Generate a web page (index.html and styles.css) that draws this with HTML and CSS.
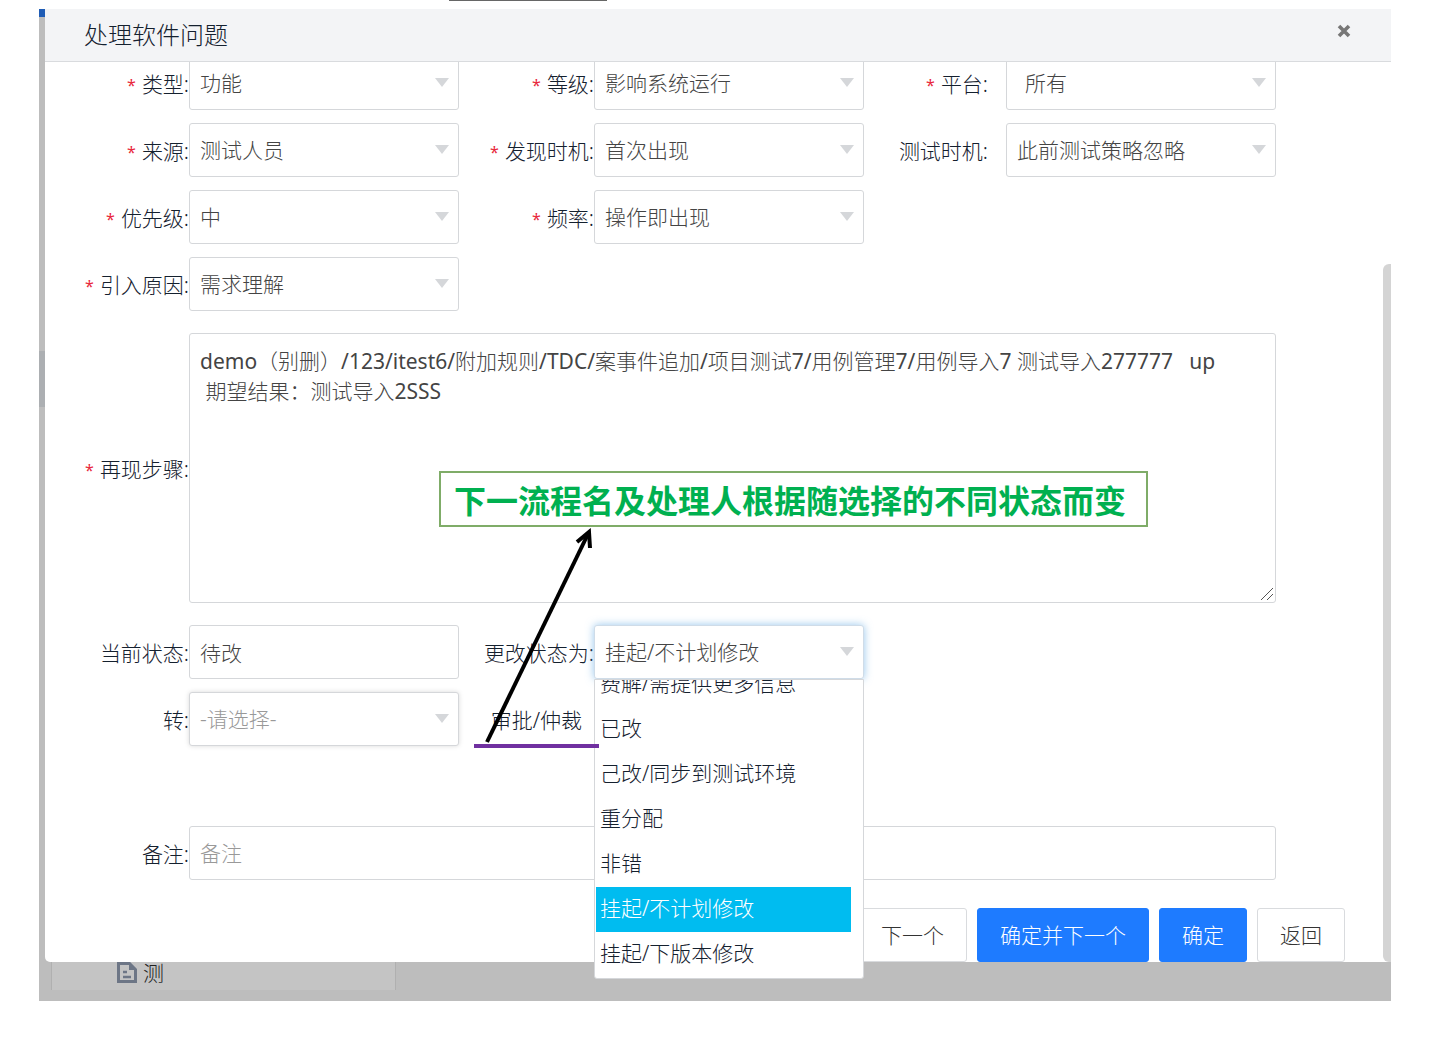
FILE: index.html
```html
<!DOCTYPE html>
<html lang="zh-CN">
<head>
  <meta charset="utf-8">
  <meta name="viewport" content="width=device-width, initial-scale=1">
  <title>处理软件问题</title>
  <link rel="stylesheet" href="styles.css">
</head>
<body>
  <div class="top-rule"></div>
  <main class="app">
    <section class="dialog" aria-labelledby="dialog-title">
      <header class="dialog-header">
        <h1 class="dialog-title" id="dialog-title">处理软件问题</h1>
        <button class="close" type="button" aria-label="关闭">
          <svg width="14" height="14" viewBox="0 0 14 14"><path d="M2 2L12 12M12 2L2 12" stroke="#777" stroke-width="3.6"/></svg>
        </button>
      </header>

      <form class="form">
        <div class="row">
          <label class="label" for="type"><span class="req">*</span>类型:</label>
          <div class="pick"><select class="field" id="type"><option>功能</option></select></div>
          <label class="label" for="level"><span class="req">*</span>等级:</label>
          <div class="pick"><select class="field" id="level"><option>影响系统运行</option></select></div>
          <label class="label label-spaced" for="platform"><span class="req">*</span>平台:</label>
          <div class="pick"><select class="field field-indent" id="platform"><option>所有</option></select></div>
        </div>
        <div class="row">
          <label class="label" for="source"><span class="req">*</span>来源:</label>
          <div class="pick"><select class="field" id="source"><option>测试人员</option></select></div>
          <label class="label" for="found"><span class="req">*</span>发现时机:</label>
          <div class="pick"><select class="field" id="found"><option>首次出现</option></select></div>
          <label class="label label-spaced" for="timing">测试时机:</label>
          <div class="pick"><select class="field" id="timing"><option>此前测试策略忽略</option></select></div>
        </div>
        <div class="row">
          <label class="label" for="priority"><span class="req">*</span>优先级:</label>
          <div class="pick"><select class="field" id="priority"><option>中</option></select></div>
          <label class="label" for="rate"><span class="req">*</span>频率:</label>
          <div class="pick"><select class="field" id="rate"><option>操作即出现</option></select></div>
        </div>
        <div class="row">
          <label class="label" for="cause"><span class="req">*</span>引入原因:</label>
          <div class="pick"><select class="field" id="cause"><option>需求理解</option></select></div>
        </div>
        <div class="row row-steps">
          <label class="label" for="steps"><span class="req">*</span>再现步骤:</label>
          <div class="wide steps">
            <textarea class="field area" id="steps">demo（别删）/123/itest6/附加规则/TDC/案事件追加/项目测试7/用例管理7/用例导入7 测试导入277777&nbsp;&nbsp; up
 期望结果：测试导入2SSS</textarea>
            <svg class="grip" width="14" height="14" viewBox="0 0 14 14"><path d="M1 13L13 1M7 13L13 7" stroke="#555" stroke-width="1"/></svg>
          </div>
        </div>
        <div class="row">
          <label class="label" for="state">当前状态:</label>
          <input class="field" id="state" type="text" value="待改">
          <label class="label" for="next-state">更改状态为:</label>
          <div class="pick pick-open">
            <select class="field field-focus" id="next-state"><option>挂起/不计划修改</option></select>
            <ul class="menu" role="listbox" aria-label="更改状态为">
              <li class="item" role="option">费解/需提供更多信息</li>
              <li class="item" role="option">已改</li>
              <li class="item" role="option">己改/同步到测试环境</li>
              <li class="item" role="option">重分配</li>
              <li class="item" role="option">非错</li>
              <li class="item item-on" role="option" aria-selected="true">挂起/不计划修改</li>
              <li class="item" role="option">挂起/下版本修改</li>
            </ul>
          </div>
        </div>
        <div class="row">
          <label class="label" for="assignee">转:</label>
          <div class="pick"><select class="field field-empty" id="assignee"><option>-请选择-</option></select></div>
          <span class="label label-flow">审批/仲裁</span>
        </div>
        <div class="row row-note">
          <label class="label" for="note">备注:</label>
          <input class="field wide" id="note" type="text" placeholder="备注">
        </div>
        <div class="actions">
          <button class="btn" type="button">下一个</button>
          <button class="btn btn-primary" type="button">确定并下一个</button>
          <button class="btn btn-primary" type="button">确定</button>
          <button class="btn" type="button">返回</button>
        </div>
      </form>

      <div class="scroll-thumb"></div>
      <p class="callout">下一流程名及处理人根据随选择的不同状态而变</p>
      <svg class="arrow" width="130" height="222" viewBox="0 0 130 222" fill="none">
        <path d="M13 214L114 6" stroke="#000" stroke-width="4"/>
        <path d="M103 14L115 4L116 20" stroke="#000" stroke-width="4"/>
        <path d="M0 218H125" stroke="#7030a0" stroke-width="4"/>
      </svg>
    </section>

    <div class="backdrop">
      <div class="tree">
        <svg width="20" height="22" viewBox="0 0 20 22" fill="none"><path d="M1.500 1.500H12.500L18.500 7.500V19.500H1.500Z" stroke="#6d7686" stroke-width="3"/><path d="M12 1V8H19Z" fill="#6d7686"/><path d="M6 10H10M6 15H14" stroke="#6d7686" stroke-width="2.500"/></svg>
        <span>测</span>
      </div>
    </div>
  </main>
</body>
</html>
```
FILE: styles.css
```css
* {
  box-sizing: border-box;
}

body {
  margin: 0;
  background: #fff;
  color: #14202e;
  font: 300 21px/30px "Noto Sans", "Noto Sans CJK SC", sans-serif;
}

.top-rule {
  width: 158px;
  height: 1px;
  margin-left: 449px;
  background: #666;
}

/* Dimmed application behind the dialog; the left edge shows its top bar and a menu row */
.app {
  margin: 8px 45px 0 39px;
  padding-left: 6px;
  background:
    linear-gradient(#1f5cb5, #1f5cb5) 0 0 / 6px 8px no-repeat,
    linear-gradient(#acafb2, #acafb2) 0 342px / 6px 56px no-repeat,
    #bdbdbd;
}

.dialog {
  position: relative;
  background: #fff;
  border-radius: 0 0 0 5px;
}

.dialog-header {
  position: relative;
  z-index: 1;
  display: flex;
  justify-content: space-between;
  align-items: flex-start;
  height: 53px;
  padding: 11px 40px 0 39px;
  background: #f3f4f6;
  border-bottom: 1px solid #d9dbde;
}

.dialog-title {
  margin: 0;
  font-size: 24px;
  font-weight: 300;
  line-height: 30px;
}

.close {
  display: flex;
  padding: 4px 0;
  border: 0;
  background: none;
}

/* The form is scrolled slightly, so its first row tucks under the header */
.form {
  margin-top: -6px;
}

.row {
  display: grid;
  grid-template-columns: 144px 1fr 135px 1fr 142px 1fr;
  align-items: center;
  margin-bottom: 13px;
  padding-right: 115px;
}

.row-steps {
  margin: 22px 0;
}

.row-note {
  margin: 80px 0 28px;
}

.wide {
  grid-column: 2 / 7;
}

.label {
  padding-top: 2px;
  text-align: right;
  white-space: nowrap;
}

.label-spaced {
  padding-right: 18px;
}

.label-flow {
  padding-right: 12px;
}

.req {
  margin-right: 6px;
  color: #e8283c;
  font-size: 16px;
  font-weight: 400;
  vertical-align: 1px;
}

.pick,
.steps {
  position: relative;
}

.pick::after {
  content: "";
  position: absolute;
  top: 22px;
  right: 10px;
  border: 7px solid transparent;
  border-top: 9px solid #d5d7da;
  border-bottom: 0;
  pointer-events: none;
}

.field {
  display: block;
  width: 100%;
  height: 54px;
  margin: 0;
  padding: 0 10px;
  border: 1px solid #d5d7da;
  border-radius: 3px;
  outline: 0;
  appearance: none;
  background: #fff;
  color: #444;
  font: inherit;
}

.field::placeholder {
  color: #999;
  opacity: 1;
}

.field-indent {
  padding-left: 18px;
}

.field-focus {
  border-color: #cfdce8;
  box-shadow: 0 0 8px rgba(82, 160, 225, 0.6);
}

.field-empty {
  color: #999;
  box-shadow: 0 0 5px rgba(0, 0, 0, 0.15);
}

.area {
  height: 270px;
  padding: 12px 10px;
  overflow: hidden;
  resize: none;
  font-family: "Noto Sans", "Noto Sans CJK SC Light", "Noto Sans CJK SC", sans-serif;
  font-weight: 400;
}

.grip {
  position: absolute;
  right: 2px;
  bottom: 2px;
}

.pick-open {
  z-index: 2;
}

.menu {
  position: absolute;
  top: 100%;
  left: 0;
  right: 0;
  height: 300px;
  margin: 0;
  padding: 0 12px 0 1px;
  overflow: hidden;
  border: 1px solid #d5d7da;
  border-radius: 0 0 3px 3px;
  background: #fff;
  list-style: none;
}

.item {
  padding: 0 4px 2px;
  line-height: 43px;
}

/* The list is scrolled to its end, which cuts the first visible entry */
.item:first-child {
  margin-top: -18px;
}

.item-on {
  background: #00bcf0;
  color: #fff;
}

.actions {
  display: flex;
  justify-content: flex-end;
  gap: 10px;
  padding-right: 46px;
}

.btn {
  height: 54px;
  padding: 0 22px;
  border: 1px solid #d9dbde;
  border-radius: 3px;
  background: #fff;
  color: #333;
  font: inherit;
}

.btn-primary {
  border-color: #1e7bff;
  background: #1e7bff;
  color: #fff;
}

.scroll-thumb {
  position: absolute;
  top: 255px;
  right: 0;
  bottom: 0;
  width: 8px;
  border-radius: 6px 0 0 6px;
  background: #d4d4d4;
}

.callout {
  position: absolute;
  top: 462px;
  left: 394px;
  margin: 0;
  padding: 4px 20px 4px 13px;
  border: 2px solid #7fac68;
  background: #fff;
  color: #00b050;
  font-family: "Noto Sans CJK SC", sans-serif;
  font-size: 32px;
  font-weight: 700;
  line-height: 44px;
  white-space: nowrap;
}

.arrow {
  position: absolute;
  z-index: 3;
  top: 519px;
  left: 429px;
  pointer-events: none;
}

.backdrop {
  padding: 0 0 11px 6px;
}

.tree {
  display: flex;
  gap: 6px;
  width: 345px;
  height: 28px;
  padding-left: 65px;
  border: 1px solid #b0b0b0;
  border-width: 0 1px;
  background: #c4c4c4;
  color: #222;
  line-height: 22px;
}
```
